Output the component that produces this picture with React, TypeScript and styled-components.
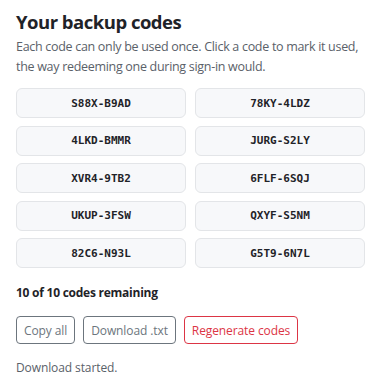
import React, { useState } from "react";
import styled, { createGlobalStyle } from "styled-components";

const Global = createGlobalStyle`
  html, body { margin: 0; padding: 0; background: #ffffff; }
  body { font-family: "Open Sans", "Noto Sans", sans-serif; color: #1f2328; }
`;

const Page = styled.div`
  padding: 9px 15px 16px 16px;
  width: 346px;
  overflow: hidden;
`;

const Title = styled.h2`
  margin: 0;
  font-size: 18.5px;
  font-weight: 700;
  line-height: 26px;
  letter-spacing: -0.5px;
  color: #1f2328;
`;

const Lead = styled.p`
  margin: 2px 0 0;
  font-size: 12.5px;
  line-height: 19.5px;
  letter-spacing: -0.3px;
  color: #5a6169;
`;

const Grid = styled.div`
  margin-top: 12px;
  display: grid;
  grid-template-columns: 170px 170px;
  column-gap: 9px;
  row-gap: 7.5px;
`;

const Code = styled.button<{ $used: boolean }>`
  height: 30px;
  box-sizing: border-box;
  border: 1px solid #e3e5e8;
  border-radius: 6px;
  background: #f7f8fa;
  font-family: "DejaVu Sans Mono", "Liberation Mono", monospace;
  font-size: 11px;
  font-weight: 700;
  color: ${(p) => (p.$used ? "#8c959f" : "#1f2328")};
  text-decoration: ${(p) => (p.$used ? "line-through" : "none")};
  cursor: pointer;
  padding: 0;
`;

const Remaining = styled.div`
  margin-top: 16px;
  font-size: 12px;
  font-weight: 700;
  line-height: 18px;
  letter-spacing: -0.25px;
  color: #1f2328;
`;

const Actions = styled.div`
  margin-top: 14px;
  display: flex;
  gap: 8px;
`;

const Btn = styled.button<{ $danger?: boolean }>`
  height: 28px;
  box-sizing: border-box;
  padding: 0 7px;
  border-radius: 4px;
  background: #ffffff;
  border: 1px solid ${(p) => (p.$danger ? "#dc3545" : "#6c757d")};
  color: ${(p) => (p.$danger ? "#dc3545" : "#6c757d")};
  font-family: "Open Sans", "Noto Sans", sans-serif;
  font-size: 12px;
  letter-spacing: -0.1px;
  cursor: pointer;
`;

const Status = styled.div`
  margin-top: 15px;
  font-size: 12px;
  line-height: 18px;
  letter-spacing: -0.1px;
  color: #5a6169;
`;

const CODES = [
  "S88X-B9AD", "78KY-4LDZ",
  "4LKD-BMMR", "JURG-S2LY",
  "XVR4-9TB2", "6FLF-6SQJ",
  "UKUP-3FSW", "QXYF-S5NM",
  "82C6-N93L", "G5T9-6N7L",
];

export default function App() {
  const [used, setUsed] = useState<Record<string, boolean>>({});
  const remaining = CODES.filter((c) => !used[c]).length;
  return (
    <>
      <Global />
      <Page>
        <Title>Your backup codes</Title>
        <Lead>
          Each code can only be used once. Click a code to mark it used, the way redeeming one during sign-in would.
        </Lead>
        <Grid>
          {CODES.map((c) => (
            <Code key={c} $used={!!used[c]} onClick={() => setUsed({ ...used, [c]: !used[c] })}>
              {c}
            </Code>
          ))}
        </Grid>
        <Remaining>{remaining} of {CODES.length} codes remaining</Remaining>
        <Actions>
          <Btn>Copy all</Btn>
          <Btn>Download .txt</Btn>
          <Btn $danger>Regenerate codes</Btn>
        </Actions>
        <Status>Download started.</Status>
      </Page>
    </>
  );
}
